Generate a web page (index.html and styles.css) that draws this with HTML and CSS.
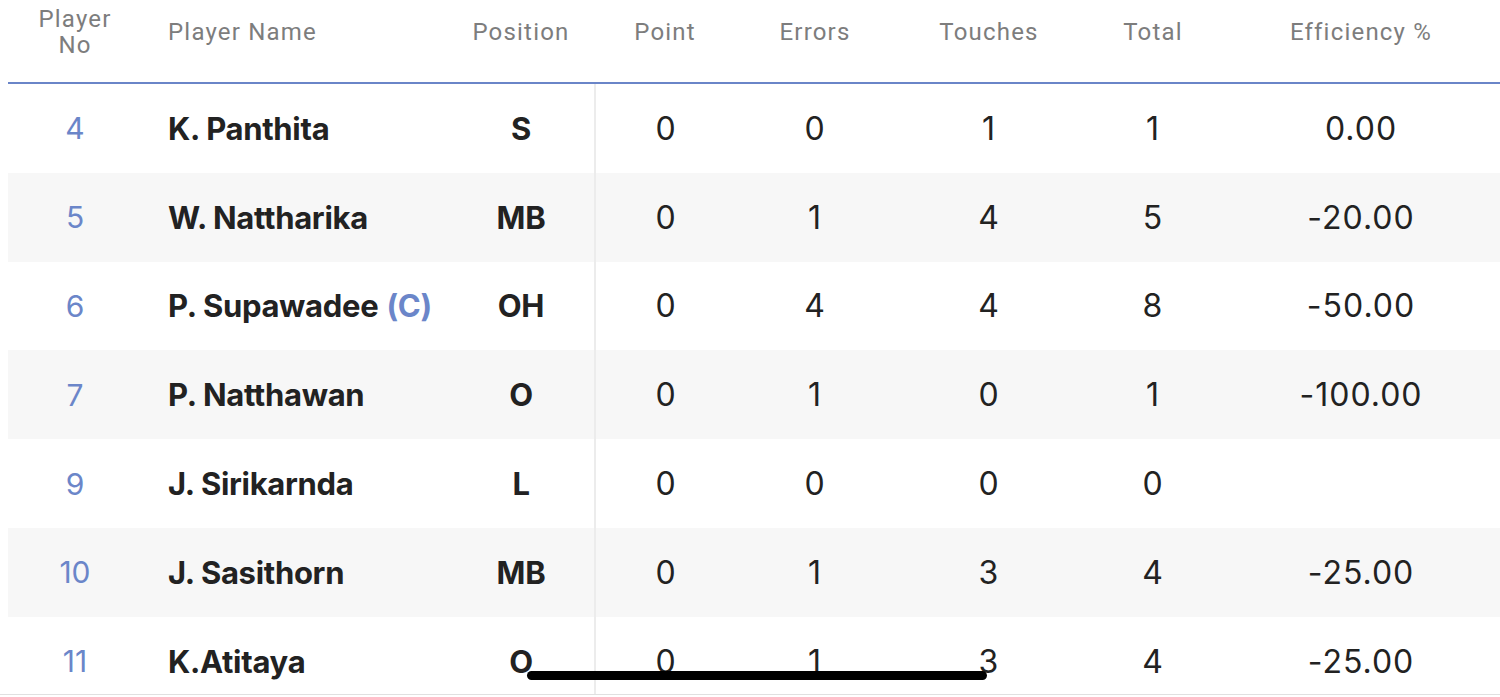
FILE: index.html
```html
<!DOCTYPE html>
<html lang="en">
<head>
<meta charset="utf-8">
<title>Player Stats</title>
<link rel="stylesheet" href="styles.css">
</head>
<body>
<div class="page">
  <div class="row head">
    <div class="c c-no two-line">Player<br>No</div>
    <div class="c c-name">Player Name</div>
    <div class="c c-pos">Position</div>
    <div class="c c-pt">Point</div>
    <div class="c">Errors</div>
    <div class="c">Touches</div>
    <div class="c">Total</div>
    <div class="c">Efficiency %</div>
  </div>
  <div class="body">
    <div class="row">
      <div class="c c-no">4</div><div class="c c-name">K. Panthita</div><div class="c c-pos">S</div>
      <div class="c c-pt">0</div><div class="c">0</div><div class="c">1</div><div class="c">1</div><div class="c">0.00</div>
    </div>
    <div class="row alt">
      <div class="c c-no">5</div><div class="c c-name">W. Nattharika</div><div class="c c-pos">MB</div>
      <div class="c c-pt">0</div><div class="c">1</div><div class="c">4</div><div class="c">5</div><div class="c">-20.00</div>
    </div>
    <div class="row">
      <div class="c c-no">6</div><div class="c c-name">P. Supawadee <span class="cap">(C)</span></div><div class="c c-pos">OH</div>
      <div class="c c-pt">0</div><div class="c">4</div><div class="c">4</div><div class="c">8</div><div class="c">-50.00</div>
    </div>
    <div class="row alt">
      <div class="c c-no">7</div><div class="c c-name">P. Natthawan</div><div class="c c-pos">O</div>
      <div class="c c-pt">0</div><div class="c">1</div><div class="c">0</div><div class="c">1</div><div class="c">-100.00</div>
    </div>
    <div class="row">
      <div class="c c-no">9</div><div class="c c-name">J. Sirikarnda</div><div class="c c-pos">L</div>
      <div class="c c-pt">0</div><div class="c">0</div><div class="c">0</div><div class="c">0</div><div class="c"></div>
    </div>
    <div class="row alt">
      <div class="c c-no">10</div><div class="c c-name">J. Sasithorn</div><div class="c c-pos">MB</div>
      <div class="c c-pt">0</div><div class="c">1</div><div class="c">3</div><div class="c">4</div><div class="c">-25.00</div>
    </div>
    <div class="row">
      <div class="c c-no">11</div><div class="c c-name">K.Atitaya</div><div class="c c-pos">O</div>
      <div class="c c-pt">0</div><div class="c">1</div><div class="c">3</div><div class="c">4</div><div class="c">-25.00</div>
    </div>
  </div>
  <div class="home-indicator"></div>
</div>
</body>
</html>
```
FILE: styles.css
```css
* { box-sizing: border-box; }
html, body { margin: 0; padding: 0; background: #fff; }
body { width: 1500px; height: 697px; overflow: hidden; }
.page {
  position: relative;
  height: 697px;
  font-family: "Inter", "Liberation Sans", sans-serif;
}
.row {
  display: grid;
  grid-template-columns: 134px 306px 146px 142px 158px 190px 138px 1fr;
  margin-left: 8px;
  align-items: center;
  height: 88.8px;
  color: #222;
  font-size: 32px;
  letter-spacing: 1px;
}
.row.alt { background: #f7f7f7; }
.c { text-align: center; height: 100%; display: flex; align-items: center; justify-content: center; }
.head {
  height: 84px;
  border-bottom: 2px solid #6a85c8;
  font-family: "Roboto", "Liberation Sans", sans-serif;
  font-size: 24px;
  letter-spacing: 1.2px;
  color: #7d7d7d;
}
.head .c { padding-bottom: 18px; }
.head .two-line { line-height: 26px; padding-bottom: 18px; }
.c-name { justify-content: flex-start; padding-left: 26px; }
.body {
  height: 611px;
  overflow: hidden;
  border-bottom: 1px solid #e0e0e0;
}
.body .c-pt { border-left: 2px solid #ececec; }
.body .c-no { color: #6b86c9; font-size: 30px; letter-spacing: 0; }
.body .c-name, .body .c-pos { font-weight: 700; font-size: 31px; letter-spacing: -0.3px; }
.cap { color: #6b86c9; margin-left: 8px; }
.home-indicator {
  position: absolute;
  left: 527px;
  top: 671px;
  width: 460px;
  height: 9px;
  border-radius: 5px;
  background: #000;
}
```
